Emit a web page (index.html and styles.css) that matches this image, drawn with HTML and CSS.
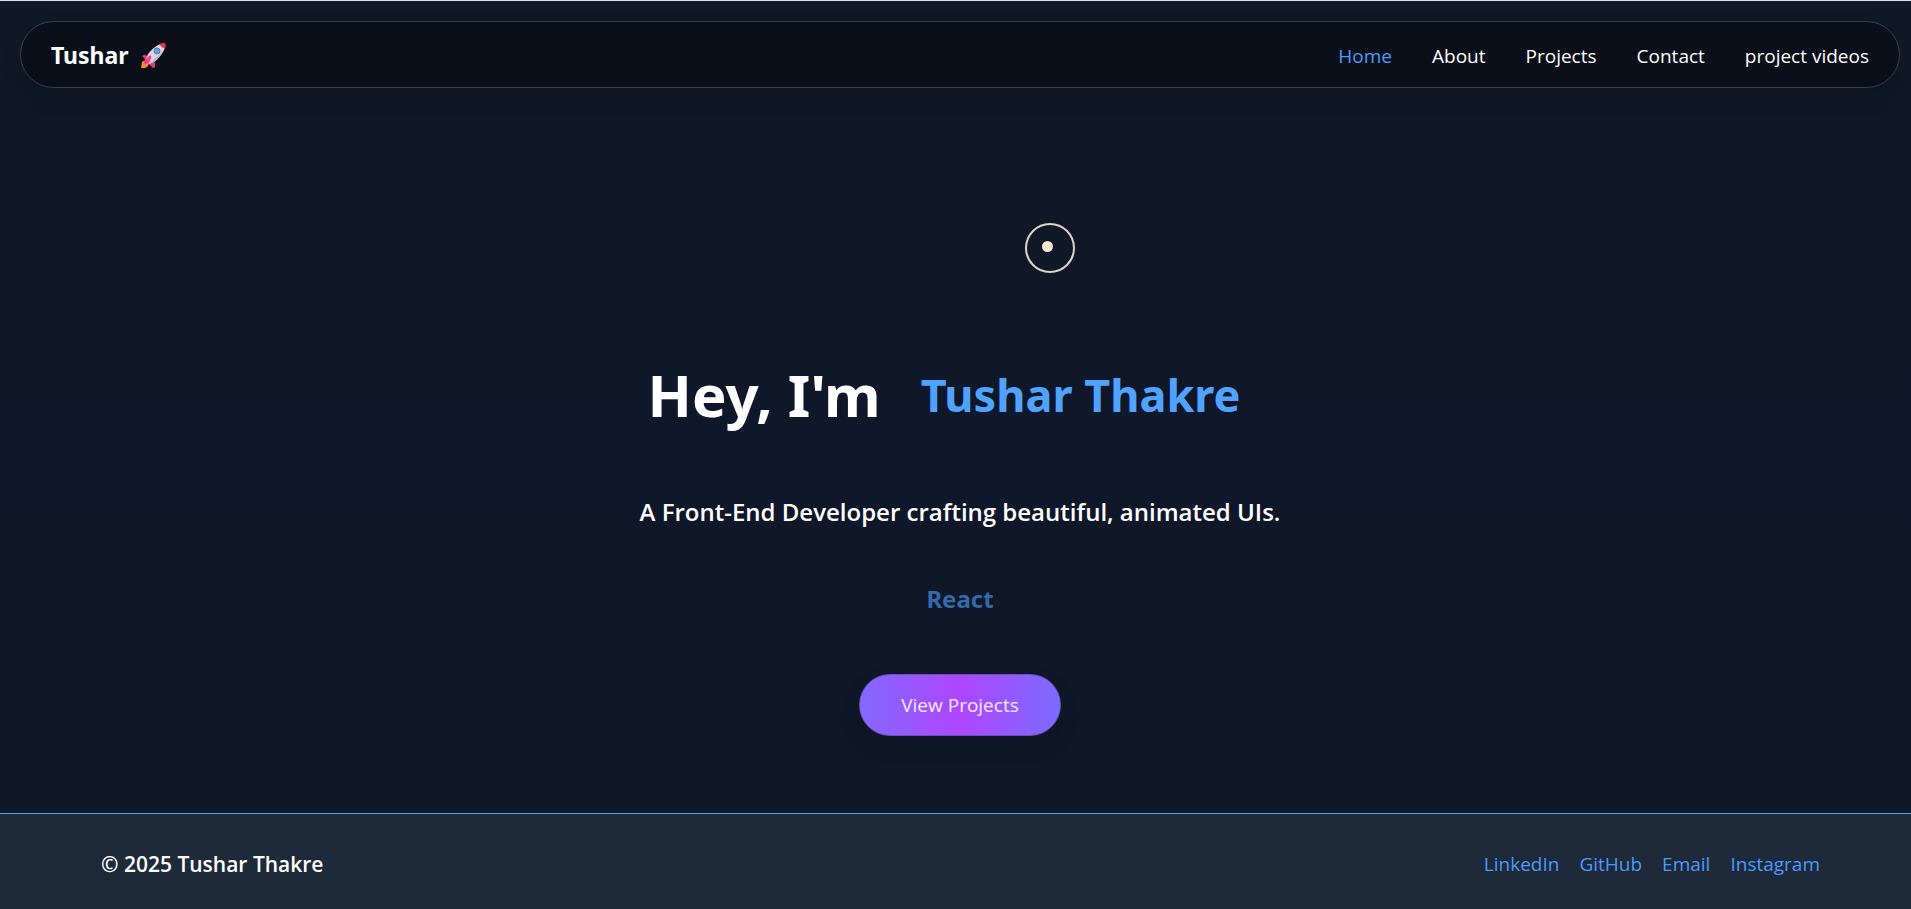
FILE: index.html
```html
<!DOCTYPE html>
<html lang="en">
<head>
<meta charset="utf-8">
<title>Tushar Thakre</title>
<link rel="stylesheet" href="styles.css">
</head>
<body>
<div class="page">
  <header class="navbar">
    <a class="brand" href="#">Tushar
      <svg class="rocket" viewBox="0 0 26 26" aria-hidden="true">
        <path d="M2 19 Q3 17 6 18 L9 21 Q8 24 5 25 L1 25 Z" fill="#f28a2e"/>
        <path d="M5 12 Q3 12 2 13 L5 16 Q4 18 4 20 L7 21 L10 14 Z" fill="#f0357c"/>
        <path d="M8 20 L13 25 L15 24 Q15 19 14 16 L10 15 Z" fill="#f0357c"/>
        <path d="M6 20 Q5 9 20 1 Q24 0 25 1 Q26 3 24 7 Q18 19 9 21 Z" fill="#dfd3e2"/>
        <path d="M9 21 Q18 18 24 7 Q21 10 14 16 Z" fill="#c5b6cd"/>
        <path d="M19 1 Q22 0 25 0 Q26 3 25 6 Q22 5 19 1 Z" fill="#e8304f"/>
        <path d="M5 20 Q6 14 11 12 Q12 16 8 21 Z" fill="#f5417f"/>
        <circle cx="17" cy="8" r="3" fill="#52a3ee" stroke="#65749b"/>
      </svg>
    </a>
    <nav class="links">
      <a class="link active" href="#">Home</a>
      <a class="link" href="#">About</a>
      <a class="link" href="#">Projects</a>
      <a class="link" href="#">Contact</a>
      <a class="link" href="#">project videos</a>
    </nav>
  </header>
  <main class="hero">
    <h1 class="title"><span>Hey, I'm</span><span class="name">Tushar Thakre</span></h1>
    <p class="tagline">A Front-End Developer crafting beautiful, animated UIs.</p>
    <p class="skill">React</p>
    <button class="cta" type="button">View Projects</button>
  </main>
  <footer class="footer">
    <p class="copyright">© 2025 Tushar Thakre</p>
    <nav class="social">
      <a href="#">LinkedIn</a>
      <a href="#">GitHub</a>
      <a href="#">Email</a>
      <a href="#">Instagram</a>
    </nav>
  </footer>
</div>
<div class="cursor-ring"></div>
<div class="cursor-dot"></div>
</body>
</html>
```
FILE: styles.css
```css
* { box-sizing: border-box; }
body {
  margin: 0;
  font-family: "Open Sans", "Noto Sans", sans-serif;
  font-size: 19px;
  line-height: 28px;
  color: #fff;
  background: #101828;
}
a { color: inherit; text-decoration: none; }
p, h1 { margin: 0; }
.page {
  display: flex;
  flex-direction: column;
  min-height: 100vh;
  border-top: 1px solid #dbe6ea;
  background: linear-gradient(#111827, #0f172a 50%, #111827);
}
.navbar {
  display: flex;
  justify-content: space-between;
  align-items: center;
  margin: 20px 11px 0 20px;
  padding: 17px 30px 15px;
  border: 1px solid #3a3e48;
  border-radius: 34px;
  background: #0b0f1a;
  box-shadow: 0 10px 20px rgba(0, 0, 0, 0.15);
}
.brand, .title, .skill { font-family: "Noto Sans", "Open Sans", sans-serif; font-weight: 700; }
.brand {
  display: flex;
  align-items: center;
  gap: 11px;
  font-size: 23px;
  line-height: 33px;
}
.rocket { width: 26px; height: 26px; }
.links { display: flex; gap: 40px; }
.active { color: #4a9bfb; }
.hero {
  flex: 1;
  display: flex;
  flex-direction: column;
  align-items: center;
  justify-content: flex-end;
  padding: 80px 20px 77px 29px;
}
.title {
  display: flex;
  align-items: center;
  gap: 40px;
  padding-right: 32px;
  font-size: 58px;
  line-height: 80px;
}
.name { font-size: 45px; color: #50a2ff; }
.tagline {
  margin-top: 57px;
  font-size: 24px;
  line-height: 40px;
  font-weight: 600;
}
.skill {
  margin-top: 47px;
  font-size: 24px;
  line-height: 40px;
  color: #346aa8;
}
.cta {
  margin-top: 55px;
  padding: 16px 41px;
  border: 1px solid #6e4fbd;
  border-radius: 31px;
  font: inherit;
  color: #f5e8ff;
  background: linear-gradient(90deg, #8468ff, #ad46ff 50%, #7c6bff);
  box-shadow: 0 10px 20px rgba(0, 0, 0, 0.15);
}
.footer {
  display: flex;
  justify-content: space-between;
  align-items: center;
  padding: 35px 91px 30px 101px;
  border-top: 1px solid #50a2ff;
  background: #1e2939;
}
.copyright { font-size: 21px; line-height: 30px; font-weight: 600; }
.social { display: flex; gap: 20px; color: #4a9bfb; }
.cursor-ring, .cursor-dot { position: absolute; border-radius: 50%; pointer-events: none; }
.cursor-ring {
  left: 1025px;
  top: 223px;
  width: 50px;
  height: 50px;
  border: 2px solid #ddd5c3;
}
.cursor-dot {
  left: 1042px;
  top: 241px;
  width: 11px;
  height: 11px;
  background: #f3e9d2;
}
```
